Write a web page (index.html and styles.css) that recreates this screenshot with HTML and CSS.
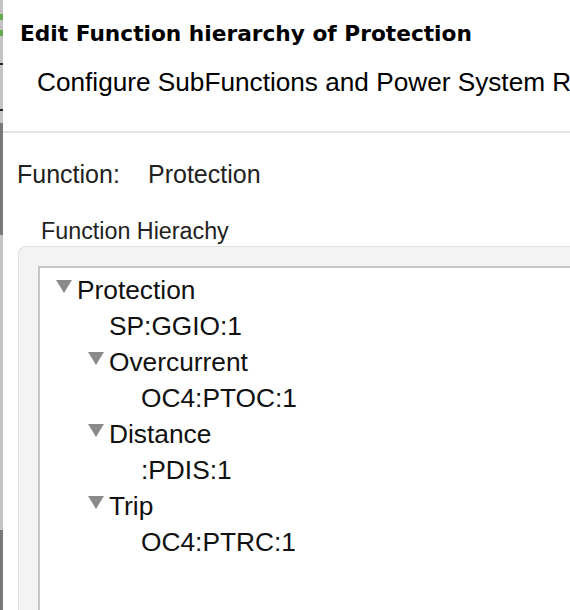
FILE: index.html
```html
<!DOCTYPE html>
<html>
<head>
<meta charset="utf-8">
<link rel="stylesheet" href="styles.css">
</head>
<body>
<div class="app">
  <div class="edge"></div>
  <div class="main">
    <header class="header">
      <h1 class="title">Edit Function hierarchy of Protection</h1>
      <p class="subtitle">Configure SubFunctions and Power System Resources</p>
    </header>
    <section class="content">
      <div class="field">
        <span class="field-label">Function:</span>
        <span class="field-value">Protection</span>
      </div>
      <div class="group-label">Function Hierachy</div>
      <div class="group">
        <div class="tree">
          <div class="row l0"><span class="tri"></span><span class="txt">Protection</span></div>
          <div class="row l1 leaf"><span class="txt">SP:GGIO:1</span></div>
          <div class="row l1"><span class="tri"></span><span class="txt">Overcurrent</span></div>
          <div class="row l2 leaf"><span class="txt">OC4:PTOC:1</span></div>
          <div class="row l1"><span class="tri"></span><span class="txt">Distance</span></div>
          <div class="row l2 leaf"><span class="txt">:PDIS:1</span></div>
          <div class="row l1"><span class="tri"></span><span class="txt">Trip</span></div>
          <div class="row l2 leaf"><span class="txt">OC4:PTRC:1</span></div>
        </div>
      </div>
    </section>
  </div>
</div>
</body>
</html>
```
FILE: styles.css
```css
html, body {
  margin: 0;
  padding: 0;
  background: #ffffff;
  overflow: hidden;
}
body {
  width: 570px;
  height: 610px;
  font-family: "Liberation Sans", Arial, sans-serif;
  color: #111;
}
.app {
  display: flex;
  height: 610px;
}
.edge {
  width: 3px;
  flex: none;
  background: linear-gradient(to bottom,
    #c4c4c4 0, #c4c4c4 14px, #6aa84f 14px, #6aa84f 20px, #c4c4c4 20px,
    #c4c4c4 30px, #6aa84f 30px, #6aa84f 36px, #c4c4c4 36px,
    #c4c4c4 63px, #222 63px, #222 65px, #c4c4c4 65px,
    #c4c4c4 109px, #222 109px, #222 111px, #c4c4c4 111px,
    #c4c4c4 123px, #7a7a7a 123px, #7a7a7a 235px, #c4c4c4 235px,
    #c4c4c4 530px, #7a7a7a 530px);
}
.main {
  flex: 1;
  min-width: 0;
  overflow: hidden;
}
.header {
  padding: 20px 0 0 17px;
  height: 111px;
  border-bottom: 2px solid #e3e3e3;
  white-space: nowrap;
  overflow: hidden;
}
.title {
  margin: 0;
  font-family: "DejaVu Sans", Verdana, sans-serif;
  font-weight: bold;
  font-size: 21.7px;
  line-height: 28px;
  color: #000;
}
.subtitle {
  margin: 18px 0 0 17px;
  font-size: 26.2px;
  line-height: 32px;
  color: #000;
}
.content {
  padding: 27px 0 0 14px;
}
.field {
  display: flex;
  font-size: 25px;
  line-height: 28px;
  color: #222;
}
.field-label {
  width: 131px;
}
.group-label {
  margin: 30px 0 0 24px;
  font-size: 23.3px;
  line-height: 26px;
  color: #222;
}
.group {
  margin: 2px 0 0 1px;
  background: #f3f3f3;
  border: 1px solid #e2e2e2;
  border-right: none;
  border-radius: 8px 0 0 0;
  padding: 19px 0 0 19px;
  height: 400px;
}
.tree {
  background: #fff;
  border-top: 2px solid #c6c6c6;
  border-left: 2px solid #c6c6c6;
  padding: 4px 0 0 0;
  height: 400px;
}
.row {
  display: flex;
  align-items: center;
  height: 36px;
  font-size: 26.3px;
  color: #111;
  white-space: nowrap;
}
.l0 { padding-left: 16px; }
.l1 { padding-left: 48px; }
.l2 { padding-left: 80px; }
.l1.leaf { padding-left: 69px; }
.l2.leaf { padding-left: 101px; }
.tri {
  width: 0;
  height: 0;
  border-left: 8px solid transparent;
  border-right: 8px solid transparent;
  border-top: 13px solid #8a8a8a;
  margin-right: 5px;
  margin-top: -7px;
}
```
